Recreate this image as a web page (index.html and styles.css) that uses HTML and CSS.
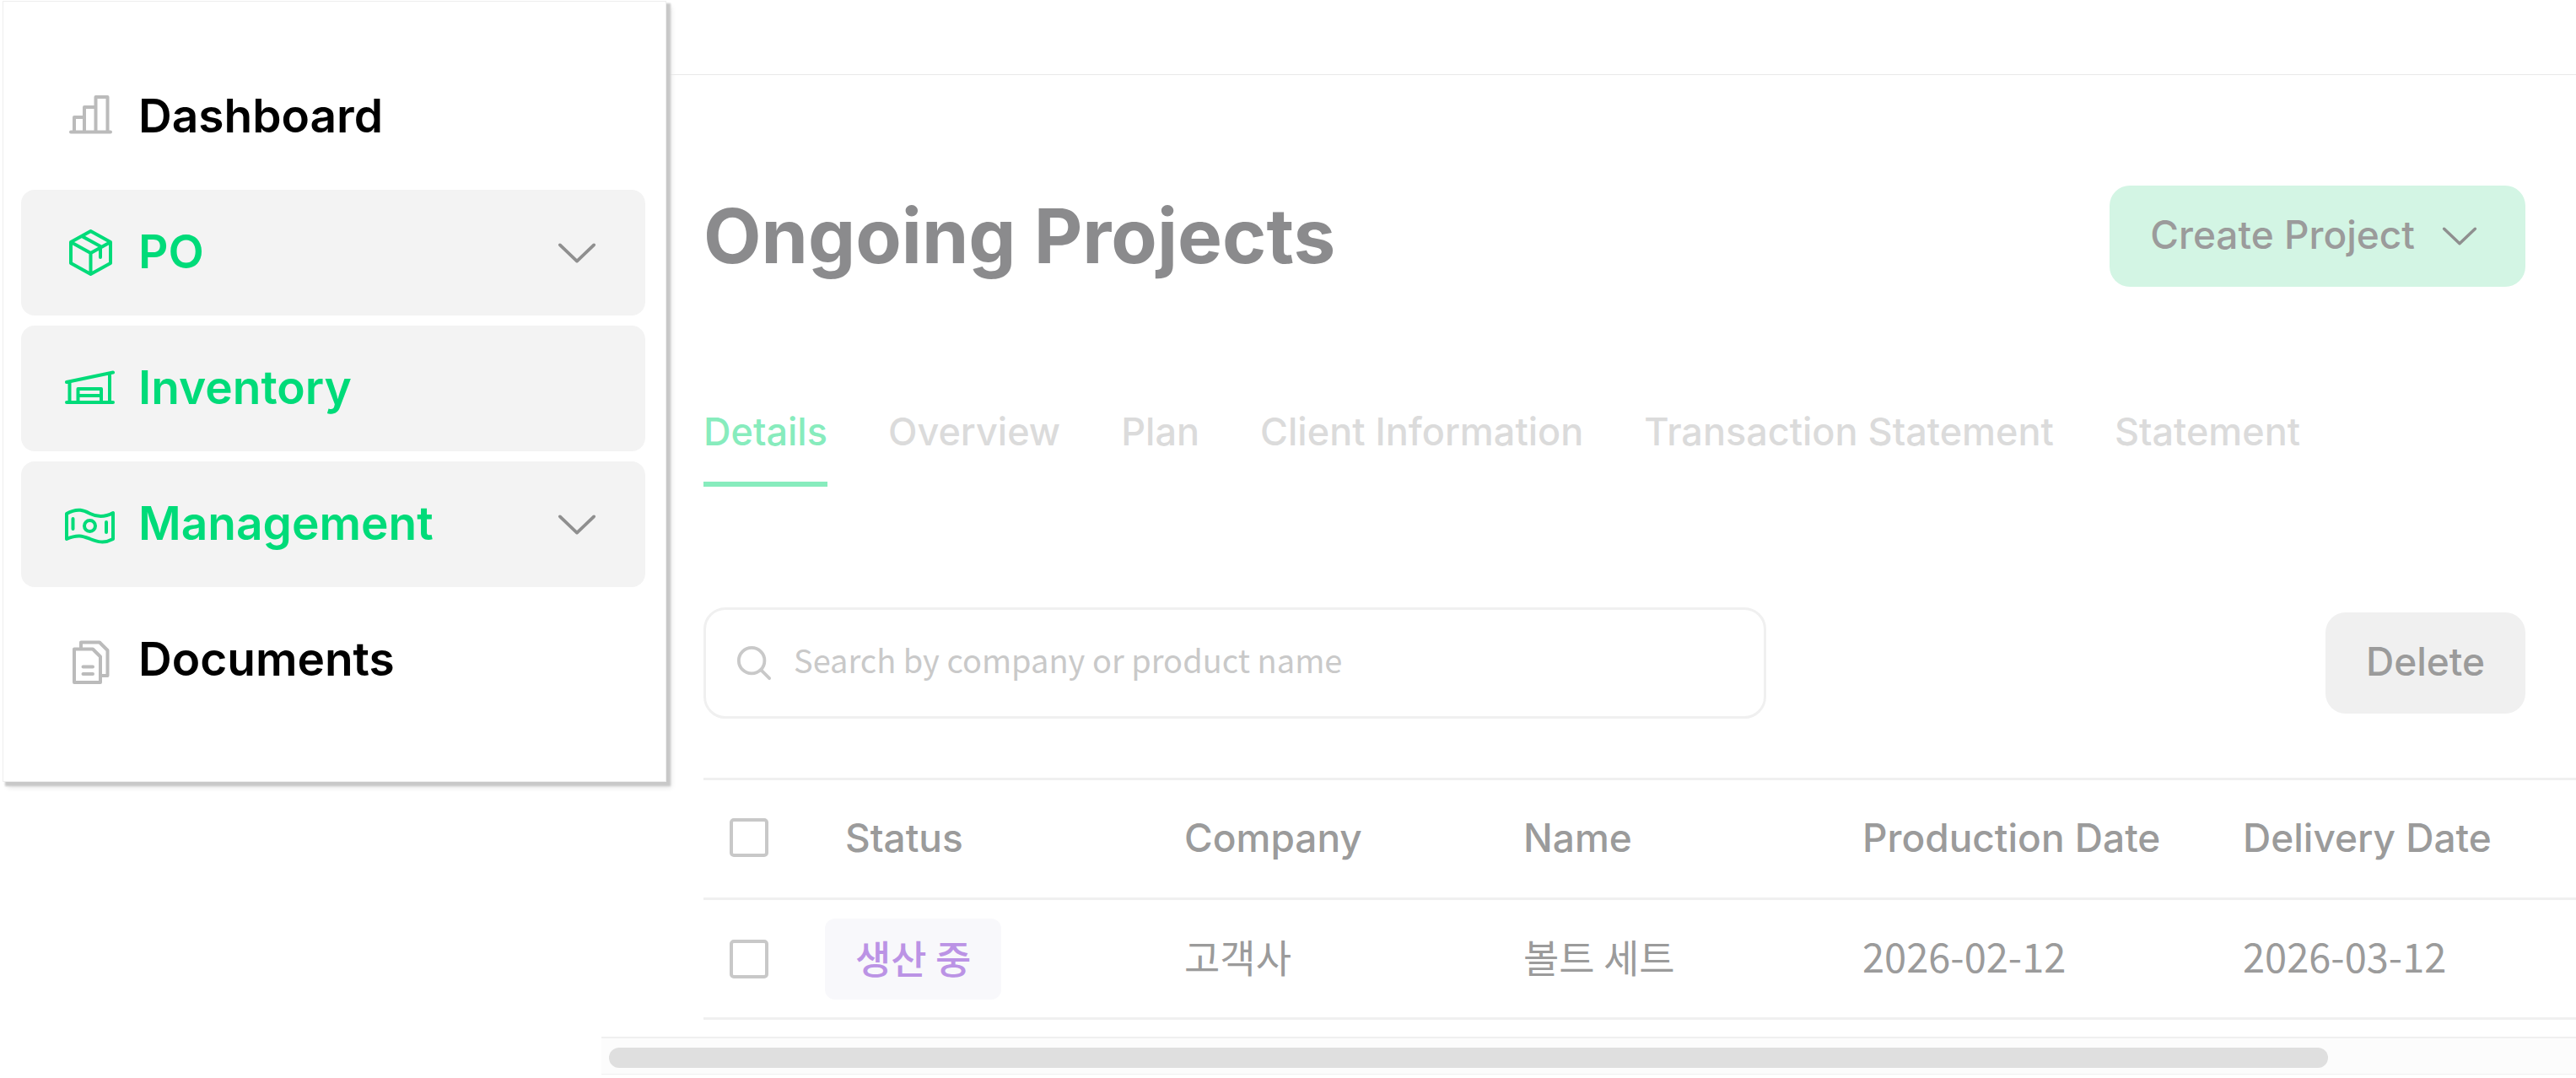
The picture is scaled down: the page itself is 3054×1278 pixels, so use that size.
FILE: index.html
```html
<!DOCTYPE html>
<html lang="en">
<head>
	<meta charset="utf-8" />
	<title>Ongoing Projects</title>
	<link rel="stylesheet" href="styles.css">
</head>
<body>
	<div class="app">
		<nav class="sidebar">
			<a class="nav-item" href="#">
				<svg class="nav-icon" viewBox="0 0 60 60"><path d="M7 47.500h47M11 47V30h12M23 47V18h13.500M36.500 47V6h14v41"/></svg>
				<span>Dashboard</span>
			</a>
			<a class="nav-item active" href="#">
				<svg class="nav-icon" viewBox="0 0 60 60"><path d="M30.500 4 54 17v25L30.500 55 7 42V17zM7 17l23.500 13L54 17M30.500 30v25M20 10l22 12v13"/></svg>
				<span>PO</span>
				<svg class="arrow" viewBox="0 0 48 26"><path d="M3 3l21 20L45 3"/></svg>
			</a>
			<a class="nav-item active" href="#">
				<svg class="nav-icon" viewBox="0 0 60 60"><path d="M2 46h55M2 22l55-11.500M5.500 22v24M53 12v34M15.500 46V30H43v16M15.500 38H43"/></svg>
				<span>Inventory</span>
			</a>
			<a class="nav-item active" href="#">
				<svg class="nav-icon" viewBox="0 0 60 60"><path d="M2 17c14-8 22-3 28 0s16 5 27-1v31c-11 6-19 3-27 0s-14-6-28 0zM9.500 23v12M49 27v12"/><circle cx="29.500" cy="31.500" r="6.500"/></svg>
				<span>Management</span>
				<svg class="arrow" viewBox="0 0 48 26"><path d="M3 3l21 20L45 3"/></svg>
			</a>
			<a class="nav-item" href="#">
				<svg class="nav-icon" viewBox="0 0 60 60"><path d="M19 16V8.500h22l9.500 9.500v30H43M11 16.500h22l9 9V56H11zM21.500 37.500H33M21.500 46H33"/></svg>
				<span>Documents</span>
			</a>
		</nav>

		<main class="main">
			<div class="topbar"></div>
			<div class="content">
				<div class="title-row">
					<h1>Ongoing Projects</h1>
					<button class="btn btn-create" type="button">
						Create Project
						<svg class="arrow" viewBox="0 0 48 26"><path d="M3 3l21 20L45 3"/></svg>
					</button>
				</div>

				<div class="tabs">
					<a class="tab current" href="#">Details</a>
					<a class="tab" href="#">Overview</a>
					<a class="tab" href="#">Plan</a>
					<a class="tab" href="#">Client Information</a>
					<a class="tab" href="#">Transaction Statement</a>
					<a class="tab" href="#">Statement</a>
				</div>

				<div class="tools">
					<label class="search">
						<svg class="search-icon" viewBox="0 0 44 44"><circle cx="19" cy="19" r="16"/><path d="M31 31l10 10"/></svg>
						<input type="text" placeholder="Search by company or product name" aria-label="Search">
					</label>
					<button class="btn btn-delete" type="button">Delete</button>
				</div>
			</div>

			<table class="projects">
				<thead>
					<tr>
						<th class="check"><input type="checkbox" aria-label="Select all"></th>
						<th class="status">Status</th>
						<th class="company">Company</th>
						<th class="name">Name</th>
						<th class="produced">Production Date</th>
						<th>Delivery Date</th>
					</tr>
				</thead>
				<tbody>
					<tr>
						<td><input type="checkbox" aria-label="Select project"></td>
						<td><span class="badge">생산 중</span></td>
						<td><span class="value">고객사</span></td>
						<td><span class="value">볼트 세트</span></td>
						<td><span class="value date">2026-02-12</span></td>
						<td><span class="value date">2026-03-12</span></td>
					</tr>
				</tbody>
			</table>

			<div class="scrollbar"><div class="thumb"></div></div>
		</main>
	</div>
</body>
</html>
```
FILE: styles.css
```css
* {
	box-sizing: border-box;
	margin: 0px;
	padding: 0px;
}
body {
	background: #fff;
	font-family: Inter, "Noto Sans CJK KR", sans-serif;
	overflow-x: hidden;
}
a {
	color: inherit;
	text-decoration: none;
}
svg {
	fill: none;
	stroke: currentColor;
	stroke-width: 4;
	stroke-linecap: round;
	stroke-linejoin: round;
	flex: none;
}
.app {
	display: flex;
	align-items: flex-start;
}

/* sidebar */
.sidebar {
	position: relative;
	z-index: 1;
	flex: none;
	width: 787px;
	margin: 1px 0px 0px 3px;
	padding: 62px 24px 69px 21px;
	background: #fff;
	border: 1px solid #eee;
	box-shadow: 4px 4px 2px 1px #c8c8c8, 6px 7px 6px #e8e8e8;
	display: flex;
	flex-direction: column;
	gap: 12px;
}
.nav-item {
	display: flex;
	align-items: center;
	gap: 27px;
	height: 149px;
	padding: 0px 58px 0px 52px;
	border-radius: 16px;
	font-size: 55px;
	font-weight: 600;
	color: #000;
}
.nav-item span {
	padding-bottom: 4px;
}
.nav-item.active {
	background: #f3f3f3;
	color: #00db79;
}
.nav-icon {
	width: 60px;
	height: 60px;
	color: #bbb;
}
.active .nav-icon {
	color: #00db79;
}
.arrow {
	width: 46px;
	height: 26px;
	color: #8f8f8f;
	margin-left: auto;
}

/* main */
.main {
	flex: 1;
	min-width: 0px;
	margin-left: -77px;
	color: #9b9b9b;
}
.topbar {
	height: 89px;
	border-bottom: 1px solid #e8e8e8;
}
.content {
	padding: 131px 60px 0px 121px;
}
.title-row,
.tools {
	display: flex;
	align-items: center;
	justify-content: space-between;
}
h1 {
	font-size: 89px;
	line-height: 120px;
	font-weight: 700;
	color: #8b8b8d;
}
.btn {
	height: 120px;
	padding: 0px 48px 4px;
	border: none;
	border-radius: 24px;
	font-family: inherit;
	font-size: 46px;
	font-weight: 500;
	color: #9b9b9b;
}
.btn-create {
	display: flex;
	align-items: center;
	gap: 32px;
	padding-right: 57px;
	background: #d3f5e4;
}
.btn-create .arrow {
	width: 42px;
	margin-top: 4px;
}
.btn-delete {
	background: #f0f0f0;
}
.tabs {
	display: flex;
	gap: 72px;
	margin-top: 132px;
}
.tab {
	height: 105px;
	padding-top: 10px;
	font-size: 45px;
	line-height: 60px;
	font-weight: 500;
	color: #dbdbdb;
}
.tab.current {
	color: #87ecbd;
	border-bottom: 6px solid #87ecbd;
}
.tools {
	margin-top: 143px;
}
.search {
	display: flex;
	align-items: center;
	gap: 26px;
	width: 1260px;
	height: 132px;
	padding: 0px 36px;
	border: 3px solid #f0f0f0;
	border-radius: 26px;
}
.search-icon {
	width: 42px;
	height: 42px;
	color: #c9c9c9;
}
.search input {
	flex: 1;
	padding-bottom: 10px;
	border: none;
	outline: none;
	background: none;
	font-family: "Noto Sans CJK KR", sans-serif;
	font-size: 38px;
}
.search input::placeholder {
	color: #c9c9c9;
}

/* table */
.projects {
	width: calc(100% - 121px);
	margin: 70px 0px 0px 121px;
	border-collapse: collapse;
	table-layout: fixed;
	border-top: 3px solid #f0f0f0;
	text-align: left;
}
.projects tr {
	height: 142px;
	border-bottom: 3px solid #f0f0f0;
}
.projects th {
	padding-bottom: 4px;
	font-size: 46px;
	font-weight: 500;
}
.projects td {
	font-family: "Noto Sans CJK KR", sans-serif;
	font-size: 46px;
	font-weight: 400;
}
.check {
	width: 168px;
}
.status,
.company,
.name {
	width: 402px;
}
.produced {
	width: 451px;
}
.projects input {
	appearance: none;
	display: block;
	width: 46px;
	height: 46px;
	margin-left: 31px;
	border: 4px solid #c8c8c8;
	border-radius: 5px;
}
.badge {
	display: inline-block;
	margin-left: -24px;
	padding: 0px 36px 6px;
	border-radius: 12px;
	background: #f8f8fb;
	color: #bb93e5;
	font-weight: 500;
	line-height: 90px;
	vertical-align: middle;
}
.value {
	display: block;
	padding-bottom: 8px;
}
.date {
	font-size: 47px;
}

/* horizontal scrollbar */
.scrollbar {
	height: 45px;
	margin-top: 20px;
	padding: 11px 0px 0px 9px;
	background: #fcfcfc;
	border-top: 2px solid #f0f0f0;
	border-bottom: 1px solid #f0f0f0;
}
.thumb {
	width: 87.4%;
	height: 24px;
	border-radius: 12px;
	background: #dfdfdf;
}
```
